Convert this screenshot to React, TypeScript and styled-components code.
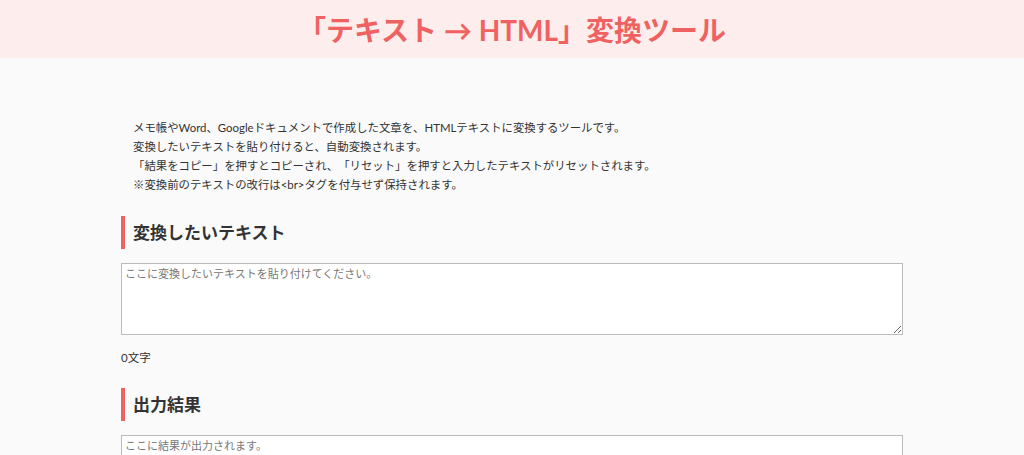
import { useState } from 'react';
import styled, { createGlobalStyle } from 'styled-components';

const GlobalStyle = createGlobalStyle`
  body {
    margin: 0;
    background: #fafafa;
    font-family: Lato, "Noto Sans CJK JP", sans-serif;
    color: #333;
  }
`;

const Header = styled.header`
  height: 58px;
  background: #fdeeed;
  display: flex;
  align-items: center;
  justify-content: center;
`;

const Title = styled.h1`
  margin: 0;
  font-size: 28px;
  font-weight: 700;
  color: #f06262;
`;

const Main = styled.main`
  width: 782px;
  margin: 0 auto;
  padding-top: 60px;
`;

const Intro = styled.div`
  padding-left: 12px;
  font-size: 11.4px;
  line-height: 19px;
  color: #333;
  text-spacing-trim: space-all;

  p {
    margin: 0;
  }
`;

const SectionTitle = styled.h2`
  margin: 22px 0 14px;
  padding-left: 8px;
  border-left: 4px solid #f06262;
  font-size: 17px;
  font-weight: 700;
  line-height: 33px;
  color: #333;
`;

const TextBox = styled.textarea<{ $height: number }>`
  display: block;
  box-sizing: border-box;
  width: 100%;
  height: ${(p) => p.$height}px;
  margin: 0;
  padding: 2px 3px;
  border: 1px solid #bbb;
  background: #fff;
  font-family: Lato, "Noto Sans CJK JP", sans-serif;
  font-size: 11px;
  line-height: 15px;
  color: #333;

  &::placeholder {
    color: #777;
  }
`;

const Count = styled.div`
  margin-top: 14px;
  font-size: 11.5px;
  line-height: 17px;
  color: #333;
`;

const App = () => {
  const [text, setText] = useState('');
  const html = text;

  return (
    <>
      <GlobalStyle />
      <Header>
        <Title>「テキスト → HTML」変換ツール</Title>
      </Header>
      <Main>
        <Intro>
          <p>メモ帳やWord、Googleドキュメントで作成した文章を、HTMLテキストに変換するツールです。</p>
          <p>変換したいテキストを貼り付けると、自動変換されます。</p>
          <p>「結果をコピー」を押すとコピーされ、「リセット」を押すと入力したテキストがリセットされます。</p>
          <p>※変換前のテキストの改行は&lt;br&gt;タグを付与せず保持されます。</p>
        </Intro>
        <SectionTitle>変換したいテキスト</SectionTitle>
        <TextBox
          $height={72}
          placeholder="ここに変換したいテキストを貼り付けてください。"
          value={text}
          onChange={(e) => setText(e.target.value)}
        />
        <Count>{text.length}文字</Count>
        <SectionTitle>出力結果</SectionTitle>
        <TextBox $height={120} placeholder="ここに結果が出力されます。" value={html} readOnly />
      </Main>
    </>
  );
};

export default App;
